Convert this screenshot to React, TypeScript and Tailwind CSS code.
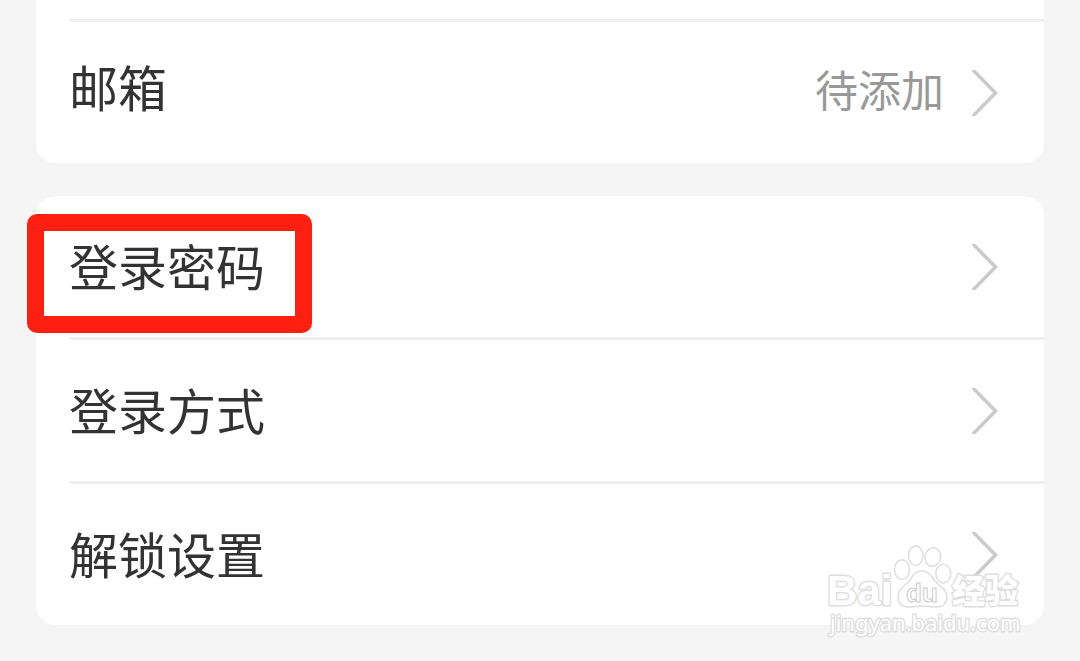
type Row = { label: string; value?: string; highlighted?: boolean };

const contactRows: Row[] = [{ label: '邮箱', value: '待添加' }];

const securityRows: Row[] = [
  { label: '登录密码', highlighted: true },
  { label: '登录方式' },
  { label: '解锁设置' },
];

function Chevron() {
  return (
    <svg className="h-[46px] w-[26px] shrink-0" viewBox="0 0 26 46" fill="none" aria-hidden="true">
      <path d="M-1 -2 L23.5 23 L-1 48" stroke="#cbcbcb" strokeWidth="3.6" />
    </svg>
  );
}

function Divider() {
  return <div className="ml-[33px] h-[3px] bg-[#efefef]" />;
}

function SettingRow({ label, value, highlighted }: Row) {
  return (
    <button type="button" className="relative flex h-[141px] w-full items-center pr-[46px] pl-[33px] text-left">
      <span className={value ? 'flex flex-1 items-baseline justify-between pb-3' : 'flex flex-1 pb-1'}>
        <span className="text-[49px] leading-[60px] text-[#333333]">{label}</span>
        {value && <span className="mr-7 text-[43px] leading-[60px] text-[#999999]">{value}</span>}
      </span>
      <Chevron />
      {highlighted && (
        <span className="pointer-events-none absolute top-[18px] -left-[9px] h-[119px] w-[285px] rounded-[10px] border-[17px] border-[#ff2012]" />
      )}
    </button>
  );
}

function Watermark() {
  return (
    <svg
      className="pointer-events-none absolute right-5 -bottom-[15px] h-[100px] w-[204px]"
      viewBox="820 540 204 100"
      fill="#ffffff"
      stroke="#dedede"
      strokeWidth="1.5"
      strokeLinejoin="round"
      aria-hidden="true"
    >
      <g paintOrder="stroke" strokeWidth="2.8">
        <text x="827" y="605" fontFamily="Liberation Sans, sans-serif" fontWeight="700" fontSize="42">Bai</text>
        <text x="952" y="603" fontFamily="Noto Sans CJK SC, sans-serif" fontWeight="900" fontSize="33">经验</text>
        <text x="830" y="631" fontFamily="Noto Sans, sans-serif" fontSize="22">jingyan.baidu.com</text>
      </g>
      <ellipse cx="902" cy="569.5" rx="7.5" ry="9.8" />
      <ellipse cx="915.7" cy="555.7" rx="7.2" ry="9.8" />
      <ellipse cx="932.8" cy="557" rx="7.8" ry="9.4" transform="rotate(12 932.8 557)" />
      <ellipse cx="943.3" cy="573.7" rx="7.5" ry="9.4" />
      <path d="M922 571 C915 571 913 576 909 581 C905 586 898 589 898 597 C898 603 902 607 908 607 C914 607 917 606 922 606 C927 606 932 607 937 607 C943 607 947 603 947 597 C947 589 939 586 935 581 C931 576 929 571 922 571 Z" />
      <text x="906" y="602" fontFamily="Liberation Sans, sans-serif" fontWeight="700" fontSize="26" stroke="#cccccc" strokeWidth="1">du</text>
    </svg>
  );
}

export default function App() {
  return (
    <main
      className="min-h-screen overflow-hidden bg-[#f5f5f5] px-9"
      style={{ fontFamily: '"Noto Sans CJK SC", sans-serif' }}
    >
      <section className="rounded-b-[20px] bg-white pt-[19px]">
        <Divider />
        {contactRows.map((row) => (
          <SettingRow key={row.label} {...row} />
        ))}
      </section>
      <section className="relative mt-[33px] rounded-[20px] bg-white">
        {securityRows.map((row, index) => (
          <div key={row.label}>
            {index > 0 && <Divider />}
            <SettingRow {...row} />
          </div>
        ))}
        <Watermark />
      </section>
    </main>
  );
}
